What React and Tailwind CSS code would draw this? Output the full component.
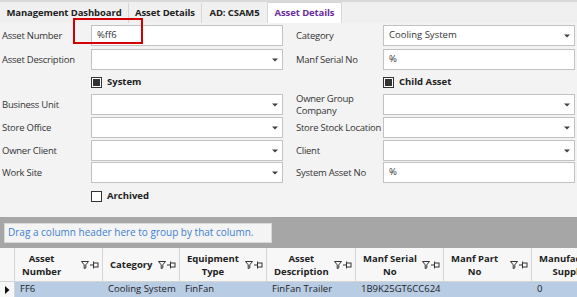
import React from "react";

const Arrow = () => (
  <svg width="6" height="4" viewBox="0 0 6 4" className="shrink-0">
    <path d="M0 0.5 H6 L3 3.5 Z" fill="#404040" />
  </svg>
);

const Input = ({ value = "", dropdown = false }) => (
  <div className="flex items-center h-full w-[192px] shrink-0 bg-white border border-[#c2c2c2] pl-[5px] pr-[4px] text-[#333]">
    <span className="flex-1 truncate">{value}</span>
    {dropdown && <Arrow />}
  </div>
);

const Label = ({ children, w }) => (
  <div className={`${w} shrink-0 flex items-center pl-[2px] text-[#333] leading-[12px] whitespace-nowrap tracking-[-0.25px]`}>{children}</div>
);

const Row = ({ l, li, r, ri, mt = "mt-[2px]" }) => (
  <div className={`flex h-[21px] ${mt}`}>
    <Label w="w-[91px]">{l}</Label>
    {li}
    <div className="w-[11px] shrink-0" />
    <Label w="w-[89px]">{r}</Label>
    {ri}
  </div>
);

const Check = ({ checked, label }) => (
  <div className="flex items-center gap-[5px]">
    <div className="w-[11px] h-[11px] border border-[#333] bg-white flex items-center justify-center">
      {checked && <div className="w-[7px] h-[7px] bg-[#333]" />}
    </div>
    <span className="font-bold text-[#222]">{label}</span>
  </div>
);

const Icons = () => (
  <svg width="18" height="8" viewBox="0 0 18 8" className="shrink-0">
    <path d="M0.5 0.5 H7.5 L4.8 3.8 V7 L3.2 7.5 V3.8 Z" fill="none" stroke="#333" strokeWidth="1" />
    <path d="M9 4 H12" stroke="#333" strokeWidth="1" />
    <path d="M12.5 0.5 V7.5" stroke="#333" strokeWidth="1" />
    <rect x="12.5" y="2" width="4.5" height="4" fill="none" stroke="#333" strokeWidth="1" />
  </svg>
);

const HeaderCell = ({ w, lines }) => (
  <div className={`${w} shrink-0 h-full flex items-center justify-between border-r border-[#d5d5d5] pl-[7px] pr-[3px]`}>
    <div className="text-center font-bold text-[#222] leading-[13px] whitespace-nowrap">
      {lines.map((t, i) => (
        <div key={i}>{t}</div>
      ))}
    </div>
    <Icons />
  </div>
);

const DataCell = ({ w, children }) => (
  <div className={`${w} shrink-0 h-full flex items-center pl-[5px] text-[#222] whitespace-nowrap overflow-hidden`}>{children}</div>
);

const Tab = ({ w, children, active }) =>
  active ? (
    <div className={`${w} h-[21px] flex items-center justify-center font-bold text-[#6a2c9b] bg-white border-x border-t border-[#d6d6d6]`}>{children}</div>
  ) : (
    <div className={`${w} h-[20px] flex items-center justify-center font-bold text-[#222] border-r border-[#d6d6d6]`}>{children}</div>
  );

export default function App() {
  return (
    <div
      className="relative w-[577px] h-[297px] overflow-hidden bg-[#f3f3f3] text-[9.5px]"
      style={{ fontFamily: '"Open Sans", "Noto Sans", sans-serif' }}
    >
      {/* Tab bar */}
      <div className="h-[23px] bg-[#f0f0f0] border-t-2 border-[#d9d9d9] flex items-end tracking-[-0.1px]">
        <Tab w="w-[129px]">Management Dashboard</Tab>
        <Tab w="w-[73px]">Asset Details</Tab>
        <div className="w-[65px] h-[20px] flex items-center justify-center font-bold text-[#222]">AD: CSAM5</div>
        <Tab w="w-[75px]" active>Asset Details</Tab>
      </div>

      {/* Form */}
      <Row mt="mt-[2px]" l="Asset Number" li={<Input value="%ff6" />} r="Category" ri={<Input value="Cooling System" dropdown />} />
      <Row mt="mt-[3px]" l="Asset Description" li={<Input dropdown />} r="Manf Serial No" ri={<Input value="%" />} />
      <div className="flex h-[24px] items-center">
        <div className="w-[91px] shrink-0" />
        <div className="w-[192px] shrink-0">
          <Check checked label="System" />
        </div>
        <div className="w-[11px] shrink-0" />
        <div className="w-[89px] shrink-0" />
        <Check checked label="Child Asset" />
      </div>
      <Row mt="mt-0" l="Business Unit" li={<Input dropdown />} r={<span>Owner Group<br />Company</span>} ri={<Input dropdown />} />
      <Row l="Store Office" li={<Input dropdown />} r="Store Stock Location" ri={<Input dropdown />} />
      <Row l="Owner Client" li={<Input dropdown />} r="Client" ri={<Input dropdown />} />
      <Row mt="mt-[1px]" l="Work Site" li={<Input dropdown />} r="System Asset No" ri={<Input value="%" />} />
      <div className="flex h-[24px] items-center mt-[1px]">
        <div className="w-[91px] shrink-0" />
        <Check label="Archived" />
      </div>

      {/* Grid */}
      <div className="absolute left-0 right-0 top-[217px] bottom-0 flex flex-col">
        <div className="h-[31px] bg-[#a6a6a6] flex items-center pl-[4px]">
          <div className="h-[20px] w-[268px] bg-[#f4f4f4] border border-[#d8d8d8] flex items-center pl-[3px] text-[#3d7fd0] whitespace-nowrap text-[10px]">
            Drag a column header here to group by that column.
          </div>
        </div>
        <div className="h-[34px] bg-[#f7f7f7] flex border-b border-[#d5d5d5]">
          <div className="w-[15px] shrink-0 border-r border-[#d5d5d5]" />
          <HeaderCell w="w-[88px]" lines={["Asset", "Number"]} />
          <HeaderCell w="w-[77px]" lines={["Category"]} />
          <HeaderCell w="w-[87px]" lines={["Equipment", "Type"]} />
          <HeaderCell w="w-[89px]" lines={["Asset", "Description"]} />
          <HeaderCell w="w-[88px]" lines={["Manf Serial", "No"]} />
          <HeaderCell w="w-[88px]" lines={["Manf Part", "No"]} />
          <HeaderCell w="w-[88px]" lines={["Manufacturer", "Supplier"]} />
        </div>
        <div className="flex-1 flex">
          <div className="w-[15px] shrink-0 bg-[#f7f7f7] flex items-center justify-center border-r border-[#d5d5d5]">
            <svg width="5" height="8" viewBox="0 0 5 8">
              <path d="M0 0 L4.5 4 L0 8 Z" fill="#111" />
            </svg>
          </div>
          <div className="flex-1 flex bg-[#b8cce4]">
            <DataCell w="w-[88px]">FF6</DataCell>
            <DataCell w="w-[77px]">Cooling System</DataCell>
            <DataCell w="w-[87px]">FinFan</DataCell>
            <DataCell w="w-[89px]">FinFan Trailer</DataCell>
            <DataCell w="w-[88px]">1B9K25GT6CC624</DataCell>
            <DataCell w="w-[88px]"></DataCell>
            <DataCell w="w-[88px]">0</DataCell>
          </div>
        </div>
      </div>

      {/* Highlight */}
      <div className="absolute left-[73px] top-[18px] w-[70px] h-[26px] border-2 border-[#d40000]" />
    </div>
  );
}
